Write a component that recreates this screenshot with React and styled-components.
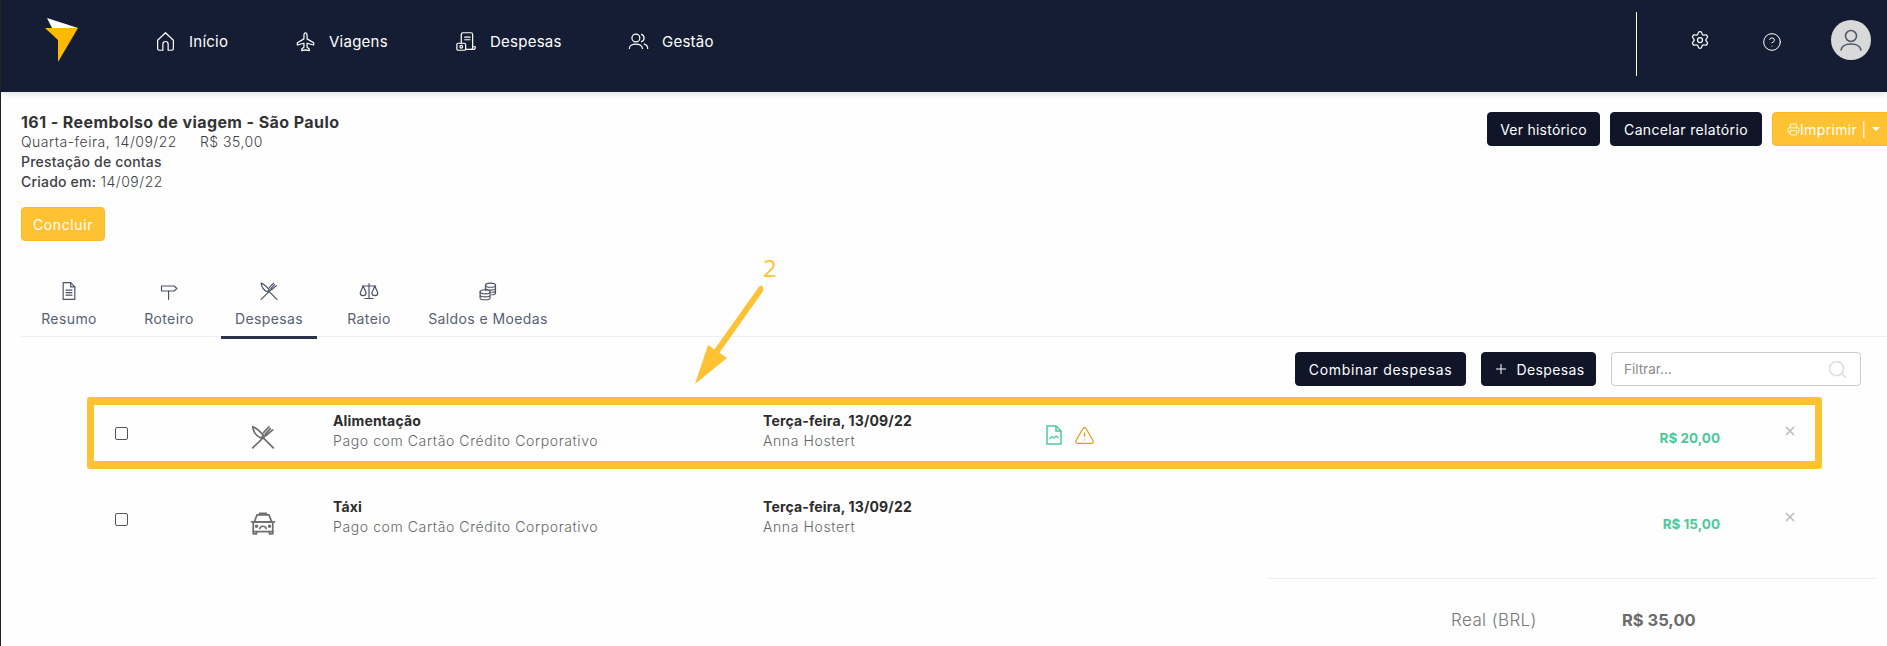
import React from "react";
import styled, { createGlobalStyle } from "styled-components";
import { CircleHelp, Plus, Printer, Search, Settings, TriangleAlert, X } from "lucide-react";

const Global = createGlobalStyle`
  html, body { margin: 0; padding: 0; background: #fefefe; }
  body { font-family: "Inter", "Liberation Sans", sans-serif; color: #333; }
  * { box-sizing: border-box; }
`;

const Page = styled.div`
  position: relative;
  width: 1887px;
  height: 646px;
  overflow: hidden;
  border-left: 1px solid #222;
  background: #fefefe;
`;

const Nav = styled.header`
  display: flex;
  align-items: center;
  height: 92px;
  padding-bottom: 10px;
  background: #141d33;
  box-shadow: 0 2px 6px rgba(0, 0, 0, 0.12);
`;

const Logo = styled.svg`
  width: 34px;
  height: 44px;
  margin-left: 44px;
  margin-right: 76px;
  margin-top: -2px;
`;

const NavMenu = styled.nav`
  display: flex;
  flex: 1;
`;

const NavItem = styled.a`
  display: flex;
  align-items: center;
  gap: 13px;
  width: ${(p) => p.$w}px;
  color: #fff;
  font-size: 15px;
  font-weight: 400;
  letter-spacing: 0.25px;
`;

const NavIcon = styled.svg`
  width: 21px;
  height: 21px;
  fill: none;
  stroke: #fff;
  stroke-width: 1.4;
  stroke-linecap: round;
  stroke-linejoin: round;
`;

const NavTools = styled.div`
  display: flex;
  align-items: center;
  align-self: stretch;
  margin-bottom: -10px;
  padding: 12px 16px 16px 0;
`;

const Divider = styled.div`
  width: 1px;
  height: 64px;
  background: #fff;
  margin-right: 53px;
`;

const ToolButton = styled.span`
  display: flex;
  width: ${(p) => p.$w}px;
  color: #fff;
  margin-top: ${(p) => p.$mt}px;
`;

const Avatar = styled.span`
  display: flex;
  align-items: center;
  justify-content: center;
  width: 40px;
  height: 40px;
  border-radius: 50%;
  background: #d9d9d9;
  margin-top: -8px;
  color: #4c5568;
`;

const Header = styled.section`
  display: flex;
  justify-content: space-between;
  align-items: flex-start;
  padding: 20px 0 0 20px;
  height: 149px;
`;

const Info = styled.div`
  display: flex;
  flex-direction: column;
  align-items: flex-start;
`;

const Title = styled.h1`
  margin: 0;
  font-size: 16px;
  font-weight: 700;
  line-height: 20px;
  letter-spacing: 0.42px;
  color: #333;
`;

const Line = styled.div`
  display: flex;
  gap: 23px;
  font-size: 14px;
  line-height: 20px;
  letter-spacing: ${(p) => (p.$strong ? 0.2 : 0.5)}px;
  color: #3f3f46;
  font-weight: ${(p) => (p.$strong ? 500 : 300)};
`;

const Strong = styled.strong`
  font-weight: 500;
  letter-spacing: 0.2px;
`;

const Button = styled.button`
  display: inline-flex;
  align-items: center;
  justify-content: center;
  flex-shrink: 0;
  height: 34px;
  width: ${(p) => p.$w}px;
  padding: 0;
  border-radius: 4px;
  border: 1px solid ${(p) => (p.$accent ? "#ffb81f" : "#101628")};
  background: ${(p) => (p.$accent ? "#ffc233" : "#101628")};
  color: #fff;
  font-family: inherit;
  font-size: 14px;
  font-weight: 400;
  letter-spacing: ${(p) => p.$ls ?? 0.35}px;
  gap: ${(p) => p.$gap || 0}px;
`;

const Conclude = styled(Button)`
  margin-top: 15px;
`;

const Actions = styled.div`
  display: flex;
  gap: 10px;
  margin-right: -20px;
`;

const Caret = styled.span`
  width: 0;
  height: 0;
  margin-left: 5px;
  border-left: 4px solid transparent;
  border-right: 4px solid transparent;
  border-top: 4px solid #fff;
`;

const PrintButton = styled(Button)`
  justify-content: flex-start;
  padding-left: 14px;
`;

const TabBar = styled.div`
  display: flex;
  gap: 4px;
  height: 62px;
  margin: 34px 0 0 20px;
  border-bottom: 1px solid #eceef4;
`;

const Tab = styled.div`
  display: flex;
  flex-direction: column;
  align-items: center;
  flex-shrink: 0;
  width: ${(p) => p.$w}px;
  height: 64px;
  padding-top: 6px;
  gap: 8px;
  color: #596074;
  font-size: 14px;
  font-weight: 400;
  letter-spacing: 0.4px;
  line-height: 20px;
  border-bottom: 3px solid ${(p) => (p.$active ? "#2b3148" : "transparent")};
`;

const TabIcon = styled.svg`
  width: 20px;
  height: 20px;
  fill: none;
  stroke: #4a5068;
  stroke-width: 1.4;
  stroke-linecap: round;
  stroke-linejoin: round;
`;

const Toolbar = styled.div`
  display: flex;
  justify-content: flex-end;
  gap: 15px;
  margin-top: 15px;
  padding-right: 26px;
`;

const Filter = styled.div`
  display: flex;
  align-items: center;
  justify-content: space-between;
  width: 250px;
  height: 34px;
  padding: 0 12px;
  border: 1px solid #ccc;
  border-radius: 4px;
  font-size: 13.5px;
  color: #8c8c8c;
  background: #fff;
`;

const List = styled.div`
  margin: 2px 0 0 86px;
  width: 1735px;
`;

const Row = styled.div`
  position: relative;
  display: grid;
  grid-template-columns: 68px 178px 430px 283px 1fr 200px 102px;
  align-items: center;
  height: 86px;
`;

const Highlight = styled.div`
  position: absolute;
  inset: 9px 0 5px 0;
  border: 8px solid #ffc233;
  border-left-width: 7px;
  border-right-width: 7px;
  border-radius: 3px;
  pointer-events: none;
`;

const Check = styled.input.attrs({ type: "checkbox" })`
  appearance: none;
  justify-self: center;
  width: 13px;
  height: 13px;
  margin: 4px 0 0 0;
  border: 1px solid #555;
  border-radius: 2px;
  background: #fff;
`;

const Category = styled.div`
  display: flex;
  padding-left: 95px;
  margin-top: 12px;
`;

const CategoryIcon = styled(TabIcon)`
  width: 26px;
  height: 26px;
  stroke: #6f6f6f;
  stroke-width: 1.6;
`;

const Cell = styled.div`
  display: flex;
  flex-direction: column;
`;

const CellTitle = styled.div`
  font-size: 14px;
  font-weight: 700;
  line-height: 20px;
  letter-spacing: 0.15px;
  color: #2c2c2c;
`;

const CellSub = styled.div`
  font-size: 14px;
  font-weight: 300;
  line-height: 20px;
  letter-spacing: 0.6px;
  color: #666;
`;

const Flags = styled.div`
  display: flex;
  align-items: center;
  gap: 12px;
  margin-top: 8px;
`;

const DocIcon = styled.svg`
  width: 16px;
  height: 20px;
  fill: none;
  stroke: #4cc99b;
  stroke-width: 1.5;
`;

const Amount = styled.div`
  justify-self: end;
  margin-top: 14px;
  font-size: 13.5px;
  font-weight: 700;
  color: #4cc99b;
`;

const Remove = styled.div`
  display: flex;
  justify-content: center;
  padding-left: 38px;
  color: #bdbdbd;
`;

const Totals = styled.div`
  display: flex;
  align-items: center;
  height: 82px;
  margin: 18px 0 0 1267px;
  width: 608px;
  border-top: 1px solid #ececec;
  padding-left: 183px;
`;

const TotalLabel = styled.span`
  width: 171px;
  font-size: 17px;
  font-weight: 300;
  letter-spacing: 0.4px;
  color: #777;
`;

const TotalValue = styled.span`
  font-size: 16.5px;
  font-weight: 700;
  color: #6b6b6b;
`;

const Annotation = styled.div`
  position: absolute;
  left: 692px;
  top: 256px;
  pointer-events: none;
`;

const AnnotationNumber = styled.span`
  position: absolute;
  left: 70px;
  top: 0;
  font-family: "Open Sans", sans-serif;
  font-size: 24px;
  line-height: 24px;
  color: #ffc233;
`;

const tabIcons = {
  doc: (
    <>
      <path d="M5 2h9l5 5v15H5z" />
      <path d="M14 2v5h5M8.500 11h7M8.500 14h7M8.500 17h7" />
    </>
  ),
  sign: (
    <>
      <path d="M3 6h15l3.500 3-3.500 3H3z" />
      <path d="M11.500 12v10" />
    </>
  ),
  food: (
    <>
      <path d="M2.500 2.500c3.500 1 6 3.500 10 8l-2.500 2.500C6 11 3 7 2.500 2.500z" />
      <path d="M12 12.500L21.500 22" />
      <path d="M2.500 22L15 10" />
      <path d="M12.500 8l5-5.500M15 10.500l6-5M14 9.500l4.800-5.200" />
    </>
  ),
  scale: (
    <>
      <path d="M12 3v17M7 21h10M4 6h16" />
      <path d="M5 6l-3.500 8a3.500 3.500 0 0 0 7 0zM19 6l-3.500 8a3.500 3.500 0 0 0 7 0z" />
    </>
  ),
  coins: (
    <>
      <ellipse cx="15" cy="5" rx="6" ry="2.500" />
      <path d="M9 5v6M21 5v9c0 1.300-2 2.500-4.500 2.500M9 8.500c0 1.400 2.700 2.500 6 2.500s6-1.100 6-2.500M16.500 13.500c2.600 0 4.500-1.100 4.500-2.500" />
      <ellipse cx="8.500" cy="13" rx="6" ry="2.500" />
      <path d="M2.500 13v7c0 1.400 2.700 2.500 6 2.500s6-1.100 6-2.500v-7M2.500 16.500c0 1.400 2.700 2.500 6 2.500s6-1.100 6-2.500" />
    </>
  ),
  taxi: (
    <>
      <path d="M9 4.500V3h6v1.500" />
      <path d="M6.500 4.500h11L20 11H4z" />
      <path d="M1.500 11h21" />
      <path d="M3 11h18v9H3z" />
      <path d="M3 20v2h3v-2M18 20v2h3v-2" />
      <path d="M9 17c.500-1.500 1.500-2 3-2s2.500.5 3 2" />
      <circle cx="6" cy="15" r=".8" />
      <circle cx="18" cy="15" r=".8" />
    </>
  ),
};

const tabs = [
  { label: "Resumo", w: 96, icon: "doc" },
  { label: "Roteiro", w: 96, icon: "sign" },
  { label: "Despesas", w: 96, active: true, icon: "food" },
  { label: "Rateio", w: 96, icon: "scale" },
  { label: "Saldos e Moedas", w: 134, icon: "coins" },
];

const rows = [
  { title: "Alimentação", amount: "R$ 20,00", icon: "food", marked: true },
  { title: "Táxi", amount: "R$ 15,00", icon: "taxi" },
];

export default function App() {
  return (
    <Page>
      <Global />
      <Nav>
        <Logo viewBox="0 0 34 44">
          <polygon points="2,0 33,10 7,10" fill="#fff" />
          <polygon points="0,10 33,10 13,44 13,22" fill="#ffb900" />
        </Logo>
        <NavMenu>
          <NavItem $w={140}>
            <NavIcon viewBox="0 0 24 24">
              <path d="M3 10.500L12 2l9 8.500V20a2 2 0 0 1-2 2h-4v-7a3 3 0 0 0-6 0v7H5a2 2 0 0 1-2-2z" />
            </NavIcon>
            Início
          </NavItem>
          <NavItem $w={161}>
            <NavIcon viewBox="0 0 24 24">
              <path d="M12 2c1 0 1.800 1.500 1.800 4v3l7.500 4.500V16l-7.500-2v4.500l2.500 2v2L12 21.500l-4.300 1v-2l2.500-2V14l-7.500 2v-2.500L10.200 9V6c0-2.500.8-4 1.800-4z" />
            </NavIcon>
            Viagens
          </NavItem>
          <NavItem $w={172}>
            <NavIcon viewBox="0 0 24 24">
              <path d="M6 14V4a2 2 0 0 1 2-2h9a2 2 0 0 1 2 2v15a2 2 0 0 1-2 2h-6M10 7h6M10 10h6M19 18h3v1a2 2 0 0 1-2 2h-3" />
              <rect x="1" y="14" width="10" height="8" rx="1.500" />
              <circle cx="6" cy="18" r="1.500" />
            </NavIcon>
            Despesas
          </NavItem>
          <NavItem $w={150}>
            <NavIcon viewBox="0 0 24 24">
              <circle cx="9" cy="8" r="4.500" />
              <path d="M1.500 20c0-3 3.300-5 7.500-5s7.500 2 7.500 5M15.500 3.800a4.500 4.500 0 0 1 0 8.400M18.500 15c2.300.6 4 2.500 4 5" />
            </NavIcon>
            Gestão
          </NavItem>
        </NavMenu>
        <NavTools>
          <Divider />
          <ToolButton $w={72} $mt={-8}>
            <Settings size={20} strokeWidth={1.5} />
          </ToolButton>
          <ToolButton $w={69} $mt={-4}>
            <CircleHelp size={20} strokeWidth={1.2} />
          </ToolButton>
          <Avatar>
            <svg width="26" height="26" viewBox="0 0 26 26" fill="none" stroke="currentColor" strokeWidth="1.500" strokeLinecap="round">
              <circle cx="13" cy="9" r="5.500" />
              <path d="M3 23c1-4.500 5-6 10-6s9 1.500 10 6" />
            </svg>
          </Avatar>
        </NavTools>
      </Nav>

      <Header>
        <Info>
          <Title>161 - Reembolso de viagem - São Paulo</Title>
          <Line>
            <span>Quarta-feira, 14/09/22</span>
            <span>R$ 35,00</span>
          </Line>
          <Line $strong>Prestação de contas</Line>
          <Line>
            <span>
              <Strong>Criado em:</Strong> 14/09/22
            </span>
          </Line>
          <Conclude $accent $w={84} $ls={0.6}>Concluir</Conclude>
        </Info>
        <Actions>
          <Button $w={113} $ls={0.25}>Ver histórico</Button>
          <Button $w={152}>Cancelar relatório</Button>
          <PrintButton $accent $w={135}>
            <Printer size={13} strokeWidth={1.6} />
            Imprimir |
            <Caret />
          </PrintButton>
        </Actions>
      </Header>

      <TabBar>
        {tabs.map((t) => (
          <Tab key={t.label} $w={t.w} $active={t.active}>
            <TabIcon viewBox="0 0 24 24">{tabIcons[t.icon]}</TabIcon>
            {t.label}
          </Tab>
        ))}
      </TabBar>

      <Toolbar>
        <Button $w={171} $ls={0.7}>Combinar despesas</Button>
        <Button $w={115} $gap={8}>
          <Plus size={16} strokeWidth={1.5} />
          Despesas
        </Button>
        <Filter>
          Filtrar...
          <Search size={21} strokeWidth={2} color="#e2e2e2" />
        </Filter>
      </Toolbar>

      <List>
        {rows.map((r) => (
          <Row key={r.title}>
            {r.marked && <Highlight />}
            <Check />
            <Category>
              <CategoryIcon viewBox="0 0 24 24">{tabIcons[r.icon]}</CategoryIcon>
            </Category>
            <Cell>
              <CellTitle>{r.title}</CellTitle>
              <CellSub>Pago com Cartão Crédito Corporativo</CellSub>
            </Cell>
            <Cell>
              <CellTitle>Terça-feira, 13/09/22</CellTitle>
              <CellSub>Anna Hostert</CellSub>
            </Cell>
            <Flags>
              {r.marked && (
                <>
                  <DocIcon viewBox="0 0 16 20">
                    <path d="M1 1h9l5 5v13H1z" />
                    <path d="M10 1v5h5" />
                    <path d="M3.500 14l2.500-2.500 2 1.500 2-2 2.500 2" strokeWidth="1.200" />
                  </DocIcon>
                  <TriangleAlert size={21} strokeWidth={1.5} color="#e0a030" />
                </>
              )}
            </Flags>
            <Amount>{r.amount}</Amount>
            <Remove>
              <X size={14} strokeWidth={3} />
            </Remove>
          </Row>
        ))}
      </List>

      <Totals>
        <TotalLabel>Real (BRL)</TotalLabel>
        <TotalValue>R$ 35,00</TotalValue>
      </Totals>

      <Annotation>
        <AnnotationNumber>2</AnnotationNumber>
        <svg width="70" height="130" viewBox="0 0 70 130">
          <path d="M68 33L24 95" stroke="#ffc233" strokeWidth="6" strokeLinecap="round" />
          <polygon points="2,128 15,89 34,102" fill="#ffc233" />
        </svg>
      </Annotation>
    </Page>
  );
}
